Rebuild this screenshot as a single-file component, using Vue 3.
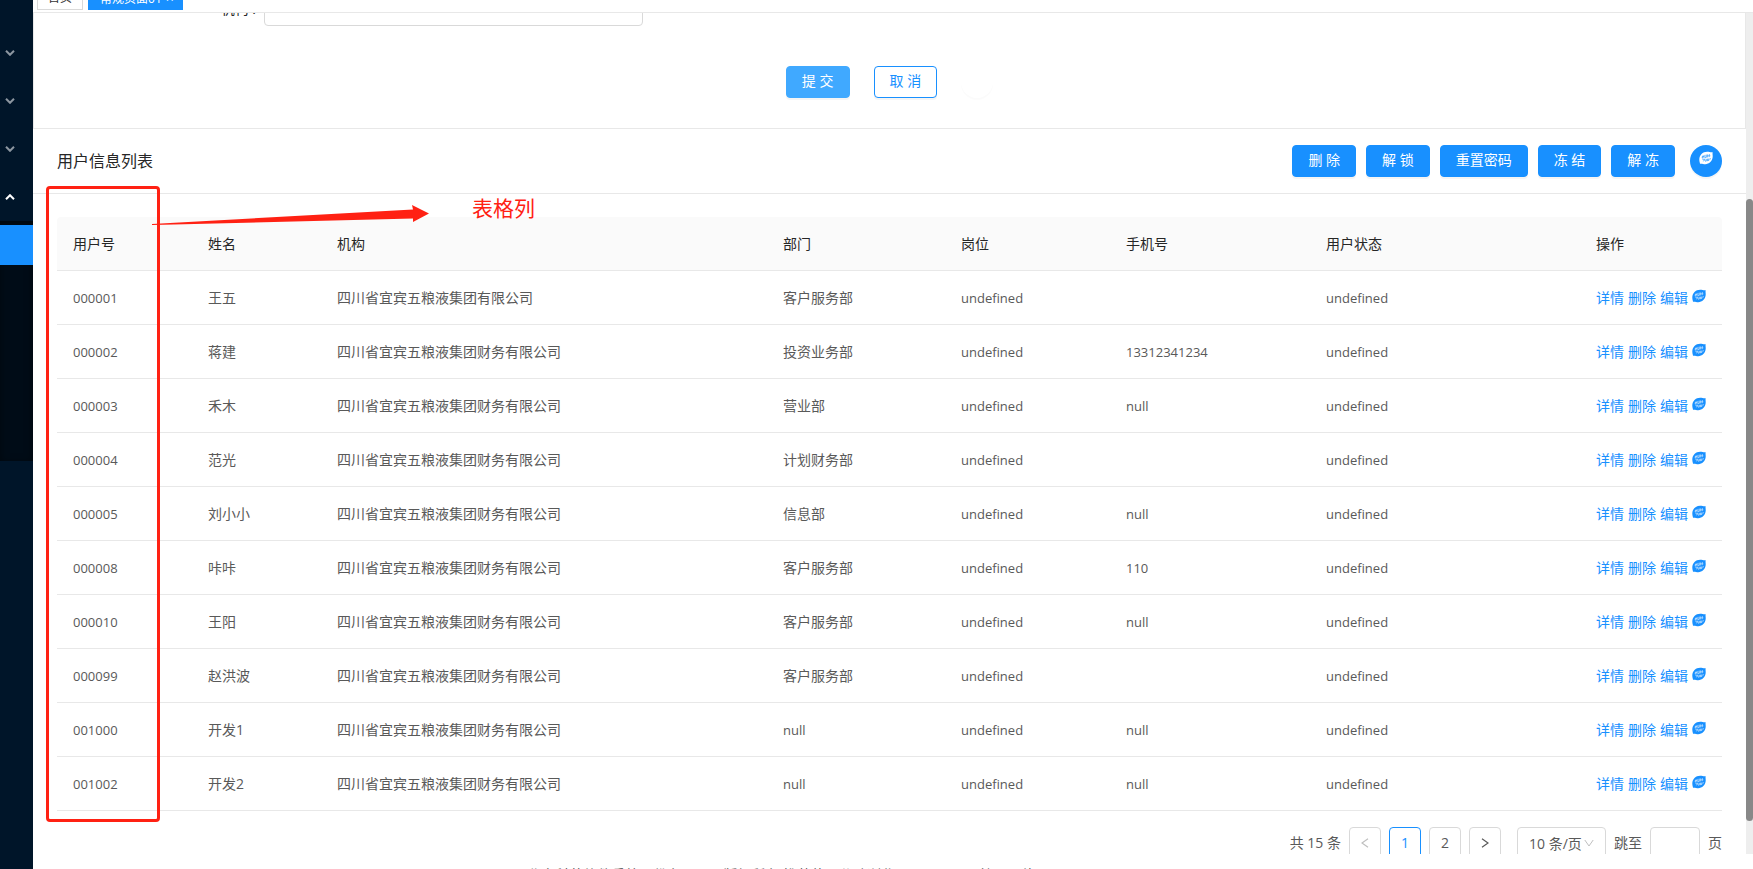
<script setup>
import { ref } from 'vue'

const org = ref('')
const pageSize = ref('10')
const jump = ref('')

const fullOrg = '四川省宜宾五粮液集团财务有限公司'
const columns = ['用户号', '姓名', '机构', '部门', '岗位', '手机号', '用户状态', '操作']
const rows = [
  { id: '000001', name: '王五', org: '四川省宜宾五粮液集团有限公司', dept: '客户服务部', phone: '' },
  { id: '000002', name: '蒋建', org: fullOrg, dept: '投资业务部', phone: '13312341234' },
  { id: '000003', name: '禾木', org: fullOrg, dept: '营业部', phone: 'null' },
  { id: '000004', name: '范光', org: fullOrg, dept: '计划财务部', phone: '' },
  { id: '000005', name: '刘小小', org: fullOrg, dept: '信息部', phone: 'null' },
  { id: '000008', name: '咔咔', org: fullOrg, dept: '客户服务部', phone: '110' },
  { id: '000010', name: '王阳', org: fullOrg, dept: '客户服务部', phone: 'null' },
  { id: '000099', name: '赵洪波', org: fullOrg, dept: '客户服务部', phone: '' },
  { id: '001000', name: '开发1', org: fullOrg, dept: 'null', phone: 'null' },
  { id: '001002', name: '开发2', org: fullOrg, dept: 'null', phone: 'null' }
]
const actions = ['删 除', '解 锁', '重置密码', '冻 结', '解 冻']

// Leaf outline and the scribbled marks inside it, shared by both icon sizes.
const leaf = 'M1 12.8 C0.9 11.6 0.3 10.6 0.3 8.6 C0.3 4 3.6 0.7 8.2 0.7 C10 0.7 11.4 1.3 13.7 1.2 C13.3 2.4 13.8 3.8 13.7 5.8 C13.4 10.2 10.2 13.2 6.2 13.2 C4.2 13.2 3 12.5 1 12.8Z'
const marks = 'M2.6 6.2 L5.2 5.2 M3.8 4.6 L3.4 7.6 M5 4.2 L4.8 7.2 M6.2 3.8 L6 6.8 L7.6 6.2 V3.6 M8.6 3.4 V6.4 M8.4 4.8 H11.4 M10.4 3 L10.2 6.2 M3.4 8.6 L5.6 8 L4.4 10.4 M5.6 8.8 L6.6 10.6 M7 7.8 V10.4 M8.4 7.6 V10.2 M7 9 H9.8 M9.8 7.4 L9.6 10 M11.4 7 L10.8 8.8'
</script>

<template>
  <div class="layout">
    <aside class="sider">
      <button v-for="n in 4" :key="n" class="menu" :class="{ open: n === 4 }" :aria-label="'菜单' + n">
        <svg width="10" height="6" viewBox="0 0 10 6"><path d="M1 0.8 L5 4.8 L9 0.8" /></svg>
      </button>
      <div class="submenu"><a href="#" class="selected" aria-label="常规页面01"></a></div>
    </aside>

    <div class="main">
      <nav class="tabs">
        <a href="#" class="tab">首页</a>
        <a href="#" class="tab active">常规页面01<span class="close">×</span></a>
      </nav>

      <div class="body">
        <div class="content">
          <form class="form-card" @submit.prevent>
            <div class="form-row">
              <label for="org">机构 :</label>
              <input id="org" v-model="org" type="text" />
            </div>
            <div class="form-actions">
              <button class="btn hover">提 交</button>
              <button type="button" class="btn ghost">取 消</button>
              <button type="button" class="round blank" aria-label="更多"></button>
            </div>
          </form>

          <section class="list">
            <header class="list-head">
              <h2>用户信息列表</h2>
              <div class="toolbar">
                <button v-for="a in actions" :key="a" class="btn">{{ a }}</button>
                <button class="round" aria-label="更多操作">
                  <svg width="14" height="14" viewBox="0 0 14 14">
                    <path class="leaf" :d="leaf" />
                    <path class="mark-blue" :d="marks" />
                  </svg>
                </button>
              </div>
            </header>

            <div class="list-body">
              <table>
                <colgroup>
                  <col v-for="n in 8" :key="n" :class="'c' + n" />
                </colgroup>
                <thead>
                  <tr><th v-for="c in columns" :key="c" scope="col">{{ c }}</th></tr>
                </thead>
                <tbody>
                  <tr v-for="r in rows" :key="r.id">
                    <td class="latin">{{ r.id }}</td>
                    <td>{{ r.name }}</td>
                    <td>{{ r.org }}</td>
                    <td :class="{ latin: r.dept === 'null' }">{{ r.dept }}</td>
                    <td class="latin">undefined</td>
                    <td class="latin">{{ r.phone }}</td>
                    <td class="latin">undefined</td>
                    <td>
                      <div class="ops">
                        <a href="#">详情</a><a href="#">删除</a><a href="#">编辑</a>
                        <a href="#" class="more" aria-label="更多">
                          <svg width="14" height="14" viewBox="0 0 14 14">
                            <path class="leaf-blue" :d="leaf" />
                            <path class="mark-white" :d="marks" />
                          </svg>
                        </a>
                      </div>
                    </td>
                  </tr>
                </tbody>
              </table>

              <div class="pager">
                <span>共 15 条</span>
                <button class="page" disabled aria-label="上一页">
                  <svg width="8" height="10" viewBox="0 0 8 10"><path d="M7 0.8 L1 5 L7 9.2" /></svg>
                </button>
                <button class="page current">1</button>
                <button class="page">2</button>
                <button class="page" aria-label="下一页">
                  <svg width="8" height="10" viewBox="0 0 8 10"><path d="M1 0.8 L7 5 L1 9.2" /></svg>
                </button>
                <div class="size">
                  <select v-model="pageSize" aria-label="每页条数">
                    <option value="10">10 条/页</option>
                    <option value="20">20 条/页</option>
                  </select>
                  <svg width="10" height="8" viewBox="0 0 10 8"><path d="M0.8 1 L5 7 L9.2 1" /></svg>
                </div>
                <label for="jump">跳至</label>
                <input id="jump" v-model="jump" type="text" />
                <span>页</span>
              </div>
            </div>
          </section>
        </div>
        <div class="scrollbar"><div class="thumb"></div></div>
      </div>

      <footer class="footer">北京科蓝软件系统股份有限公司版权所有 推荐使用谷歌浏览器，页面显示效果更佳 Copyright 2019 All rights reserved</footer>
    </div>

    <div class="mark-box"></div>
    <svg class="mark-arrow" width="280" height="20" viewBox="0 0 280 20">
      <path d="M0 20 L261 5.5 L260 1 L277 9.5 L261 18 L261 14.5 L22 20.5 L0 21Z" />
    </svg>
    <div class="mark-text">表格列</div>
  </div>
</template>

<style>
body {
  margin: 0;
}
</style>

<style scoped>
.layout {
  position: relative;
  display: flex;
  height: 100vh;
  overflow: hidden;
  background: #fff;
  font-family: "Open Sans", "Noto Sans CJK SC", sans-serif;
  font-size: 14px;
  line-height: 21px;
  color: #595959;
}
button,
input,
select {
  box-sizing: border-box;
  margin: 0;
  font: inherit;
  color: inherit;
}
button {
  cursor: pointer;
}
a {
  color: #1890ff;
  text-decoration: none;
}
svg {
  display: block;
  fill: none;
}

.sider {
  flex: none;
  width: 33px;
  padding-top: 29px;
  box-sizing: border-box;
  background: #001529;
}
.menu {
  display: block;
  width: 100%;
  height: 48px;
  padding: 0 0 0 5px;
  border: 0;
  background: none;
}
.menu path {
  stroke: #8c96a0;
  stroke-width: 2;
}
.menu.open svg {
  transform: rotate(180deg);
}
.menu.open path {
  stroke: #fff;
}
.submenu {
  height: 240px;
  padding-top: 4px;
  box-sizing: border-box;
  background: #000c17;
  box-shadow: inset 0 2px 8px rgba(0, 0, 0, 0.45);
}
.selected {
  display: block;
  height: 40px;
  background: #1890ff;
}

.main {
  flex: 1;
  min-width: 0;
  display: flex;
  flex-direction: column;
}
.tabs {
  flex: none;
  display: flex;
  gap: 5px;
  margin-top: -14px;
  padding: 0 4px 2px;
  border-bottom: 1px solid #e8e8e8;
}
.tab {
  box-sizing: border-box;
  height: 24px;
  padding: 0 10px;
  border: 1px solid #d9d9d9;
  font-size: 12px;
  line-height: 22px;
  color: #333;
}
.tab.active {
  padding: 0 8px 0 11px;
  border-color: #1890ff;
  background: #1890ff;
  color: #fff;
}
.close {
  margin-left: 4px;
  font-size: 14px;
}

.body {
  flex: 1;
  min-height: 0;
  display: flex;
  overflow: hidden;
}
.content {
  flex: 1;
  min-width: 0;
}
.scrollbar {
  flex: none;
  width: 7px;
  padding-top: 186px;
  box-sizing: border-box;
  background: #eee;
}
.thumb {
  height: 622px;
  border-radius: 4px;
  background: #888;
}

.form-card {
  padding-bottom: 30px;
  border: 1px solid #e8e8e8;
  border-top: 0;
}
.form-row {
  display: grid;
  grid-template-columns: 230px 379fr 1101fr;
  margin-top: -19px;
}
.form-row label {
  padding-right: 8px;
  line-height: 29px;
  text-align: right;
  color: #262626;
}
.form-row input {
  width: 100%;
  height: 32px;
  border: 1px solid #d9d9d9;
  border-radius: 4px;
}
.form-actions {
  display: flex;
  justify-content: center;
  gap: 24px;
  margin-top: 40px;
}

.btn {
  height: 32px;
  padding: 0 15px 2px;
  border: 1px solid #1890ff;
  border-radius: 4px;
  background: #1890ff;
  color: #fff;
  line-height: 28px;
  white-space: nowrap;
  box-shadow: 0 2px 0 rgba(0, 0, 0, 0.04);
}
.btn.hover {
  border-color: #40a9ff;
  background: #40a9ff;
}
.btn.ghost {
  background: #fff;
  color: #1890ff;
}
.round {
  display: flex;
  justify-content: center;
  width: 32px;
  height: 32px;
  margin-left: 5px;
  padding: 6px 0 0;
  border: 0;
  border-radius: 50%;
  background: #1890ff;
  box-shadow: 0 2px 0 rgba(0, 0, 0, 0.04);
}
.round.blank {
  margin-left: 0;
  background: #fff;
  box-shadow: 0 2px 0 rgba(0, 0, 0, 0.016);
}
.leaf {
  fill: #fff;
}
.leaf-blue {
  fill: #1890ff;
}
.mark-blue {
  stroke: #1890ff;
  stroke-width: 0.6;
}
.mark-white {
  stroke: #fff;
  stroke-width: 0.5;
}

.list-head {
  display: flex;
  align-items: center;
  justify-content: space-between;
  height: 64px;
  padding: 0 24px;
  border-bottom: 1px solid #e8e8e8;
}
h2 {
  margin: 0;
  font-size: 16px;
  font-weight: 400;
  color: #262626;
}
.toolbar {
  display: flex;
  gap: 10px;
}
.list-body {
  padding: 23px 24px 0;
}
table {
  width: 100%;
  table-layout: fixed;
  border-collapse: separate;
  border-spacing: 0;
}
.c1 { width: 135px; }
.c2 { width: 129px; }
.c3 { width: auto; }
.c4 { width: 178px; }
.c5 { width: 165px; }
.c6 { width: 200px; }
.c7 { width: 270px; }
.c8 { width: 142px; }
th,
td {
  box-sizing: border-box;
  height: 54px;
  padding: 0 16px;
  border-bottom: 1px solid #e8e8e8;
  font-weight: 400;
  text-align: left;
  white-space: nowrap;
}
th {
  background: #fafafa;
  color: #262626;
}
th:first-child {
  border-top-left-radius: 4px;
}
th:last-child {
  border-top-right-radius: 4px;
}
td.latin {
  padding-top: 2px;
  font-size: 13px;
}
.ops {
  display: flex;
  gap: 4px;
}
.more {
  padding-top: 2px;
}

.pager {
  display: flex;
  justify-content: flex-end;
  gap: 8px;
  margin-top: 16px;
  line-height: 32px;
}
.page {
  display: flex;
  align-items: center;
  justify-content: center;
  width: 32px;
  height: 32px;
  padding: 0;
  border: 1px solid #d9d9d9;
  border-radius: 4px;
  background: #fff;
}
.page path {
  stroke: #595959;
  stroke-width: 1.2;
}
.page:disabled path {
  stroke: #bfbfbf;
}
.page.current {
  border-color: #1890ff;
  color: #1890ff;
}
.size {
  position: relative;
  margin-left: 8px;
}
.size select {
  display: block;
  width: 89px;
  height: 32px;
  padding: 0 11px;
  border: 1px solid #d9d9d9;
  border-radius: 4px;
  background: #fff;
  appearance: none;
}
.size svg {
  position: absolute;
  top: 12px;
  right: 12px;
}
.size path {
  stroke: #bfbfbf;
}
.pager input {
  width: 50px;
  height: 32px;
  border: 1px solid #d9d9d9;
  border-radius: 4px;
}

.footer {
  flex: none;
  box-sizing: border-box;
  height: 15px;
  padding-top: 10px;
  overflow: hidden;
  text-align: center;
  white-space: nowrap;
}

.mark-box {
  position: absolute;
  top: 186px;
  left: 46px;
  width: 108px;
  height: 630px;
  border: 3px solid #ff2113;
  border-radius: 4px;
}
.mark-arrow {
  position: absolute;
  top: 204px;
  left: 152px;
  overflow: visible;
}
.mark-arrow path {
  fill: #ff2113;
}
.mark-text {
  position: absolute;
  top: 193px;
  left: 472px;
  font-size: 21px;
  line-height: 30px;
  color: #ff2113;
}
</style>
